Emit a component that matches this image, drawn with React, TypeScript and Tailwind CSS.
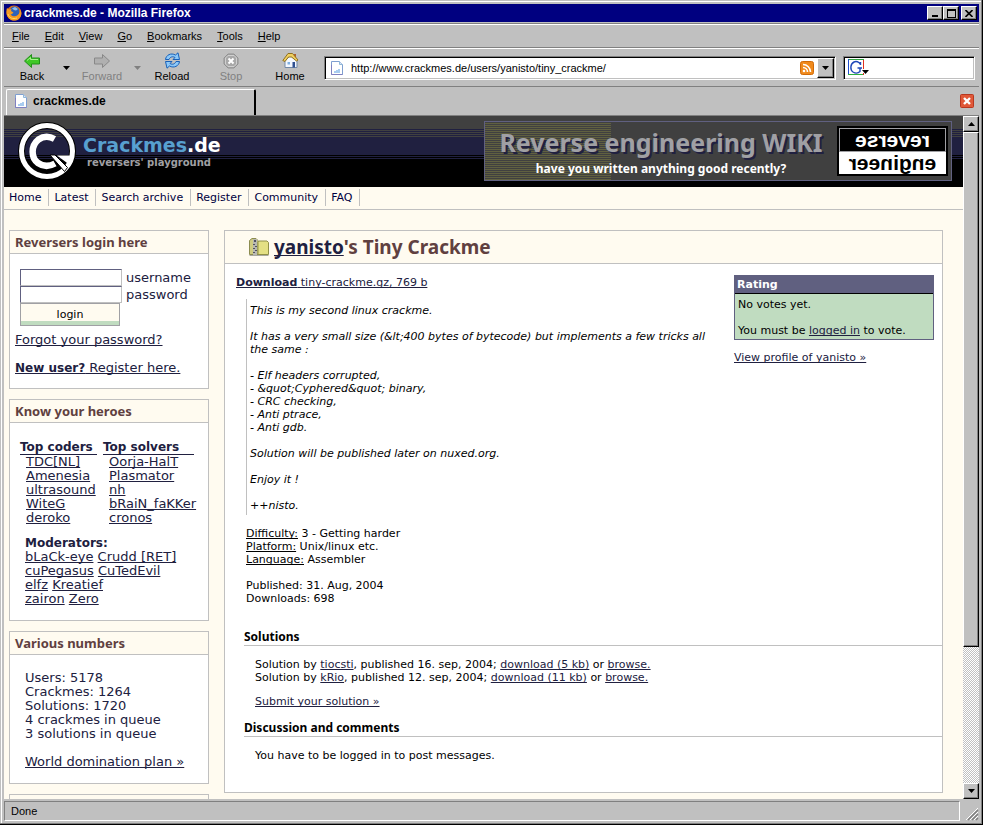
import type { ReactNode } from "react";

const ui = "font-['Liberation_Sans',Arial,sans-serif]";
const raised =
  "border border-t-white border-l-white border-r-black border-b-black bg-[#c0c0c0] shadow-[inset_-1px_-1px_0_#808080]";

function A({ children, className = "" }: { children: ReactNode; className?: string }) {
  return (
    <a href="#" className={`text-[#202040] underline ${className}`}>
      {children}
    </a>
  );
}

function FirefoxIcon() {
  return (
    <svg width="16" height="16" viewBox="0 0 16 16" aria-hidden="true">
      <circle cx="8" cy="8" r="7.5" fill="#e07010" />
      <circle cx="8.5" cy="6.5" r="5" fill="#2f62b8" />
      <path d="M6 3.5 9 2l3 2-2 1.5-2-.5z" fill="#8fc0f0" />
      <path d="M1 3l2 1.5L5.500 4 5 6l2.500 1.500L6 9l-1.500.5C6 12 9.500 12 12 10c2-2 2-4 1.500-6C16 7 16 11 13 14c-3 2.500-8 2-10.500-1C0 10 0 6 1 3z" fill="#f59a23" />
      <path d="M2 9c1 4 5 5.500 9 4" stroke="#ffd860" fill="none" />
    </svg>
  );
}

function PageIcon() {
  return (
    <svg width="12" height="14" viewBox="0 0 12 14" aria-hidden="true">
      <path d="M.5.5h8l3 3v10H.5z" fill="#fff" stroke="#7f9fd0" />
      <path d="M8.500.5v3h3" fill="#d8e6f8" stroke="#90b8d8" />
      <path d="M3 12v-2h2V9h2V8h2v4z" fill="#a8ccf0" />
      <path d="M.5 4v9.500h11" fill="none" stroke="#8080c0" />
    </svg>
  );
}

function ArrowIcon({ flip = false, fill, stroke }: { flip?: boolean; fill: string; stroke: string }) {
  return (
    <svg width="16" height="16" viewBox="0 0 16 16" aria-hidden="true">
      <path
        d={flip ? "M15.500 8 8.500 1.500V5H.500v6H8.500v3.500z" : "M.500 8l7-6.500V5h8v6h-8v3.500z"}
        fill={fill}
        stroke={stroke}
        strokeLinejoin="round"
      />
      {!flip && <path d="M3 7.500 6.500 4.500v2h7.500" stroke="#a8f090" fill="none" />}
    </svg>
  );
}

function ReloadIcon() {
  return (
    <svg width="17" height="17" viewBox="0 0 17 17" aria-hidden="true">
      <path d="M1.500 7.500C2 3 7 .500 11.500 3L14 .800l1.500 6.700H9l2-2C8.500 4 6 5 5 7.500z" fill="#8cc8f8" stroke="#1860b8" />
      <path d="M15.500 9.500c-.500 4.500-5.500 7-10 4.500L3 16.200 1.500 9.500H8l-2 2c2.500 1.500 5 .500 6-2z" fill="#8cc8f8" stroke="#1860b8" />
    </svg>
  );
}

function StopIcon() {
  return (
    <svg width="16" height="16" viewBox="0 0 16 16" aria-hidden="true">
      <path d="M5 1h6l4 4v6l-4 4H5l-4-4V5z" fill="#a8a8a8" stroke="#909090" />
      <path d="M5 2.500h6L13.500 5v6L11 13.500H5L2.500 11V5z" fill="none" stroke="#d0d0d0" />
      <path d="M5.500 5.500l5 5m0-5-5 5" stroke="#fff" strokeWidth="2" />
    </svg>
  );
}

function HomeIcon() {
  return (
    <svg width="17" height="17" viewBox="0 0 17 17" aria-hidden="true">
      <path d="M12 2h2v4h-2z" fill="#b06030" />
      <path d="M3 8.500 8 4l7 4v7.500H3z" fill="#f4f8ff" stroke="#7088a8" />
      <path d="M.8 8.500 6 1.500h4.500l5.500 6.500-1.500 1L9.500 5 6.500 5 3 9.500z" fill="#f0d060" stroke="#907020" />
      <path d="M10.500 10H13v5.500h-2.500z" fill="#305090" />
      <path d="M5.500 10H8v2.500H5.500z" fill="#80b0e0" />
    </svg>
  );
}

function RssIcon() {
  return (
    <svg width="14" height="14" viewBox="0 0 14 14" aria-hidden="true">
      <rect x=".5" y=".5" width="13" height="13" rx="2" fill="#f08a1c" stroke="#d06a08" />
      <circle cx="4" cy="10" r="1.300" fill="#fff" />
      <path d="M3 6.500A4.500 4.500 0 0 1 7.500 11M3 3.500A7.500 7.500 0 0 1 10.500 11" fill="none" stroke="#fff" strokeWidth="1.600" />
    </svg>
  );
}

function GoogleIcon() {
  return (
    <svg width="22" height="17" viewBox="0 0 22 17" aria-hidden="true">
      <path d="M16 .5H.5" stroke="#30a040" />
      <path d="M.5 0v16" stroke="#2050d0" />
      <path d="M0 15.500h16" stroke="#30b040" />
      <path d="M15.500 1v15" stroke="#e03020" />
      <path d="M12.500 6V3M12.500 5.500C11 2.500 8 2 6 3 2 5 2 11 5 13c2.500 1.500 5.500 1 7-.500V9M9.500 9H14" fill="none" stroke="#2048b8" strokeWidth="1.400" />
      <path d="M14 10h8v4h-8z" fill="#fff" />
      <path d="M14 11h7l-3.500 4z" fill="#000" />
    </svg>
  );
}

function Triangle({ up = false, fill = "#000" }: { up?: boolean; fill?: string }) {
  return (
    <svg width="7" height="4" viewBox="0 0 7 4" aria-hidden="true" className="shrink-0">
      <path d={up ? "M0 4h7L3.500 0z" : "M0 0h7L3.500 4z"} fill={fill} />
    </svg>
  );
}

function ZipIcon() {
  return (
    <svg width="20" height="18" viewBox="0 0 20 18" aria-hidden="true">
      <path d="M.5 2.500 3 .5h4l2 2v14H.5z" fill="#d0cc80" stroke="#8c8c50" />
      <path d="M9 4.500l1-1.500h8l1.500 1.500v12H9z" fill="#e4e084" stroke="#909048" />
      <path d="M4 1h4v16H4z" fill="#b8b8b0" />
      <path d="M5 2h2v2H5zM4 6h2v1H4zM6 8h2v1H6zM4 10h2v1H4zM6 12h2v1H6zM4 14h2v1H4z" fill="#505060" />
      <path d="M.5 17.500h19" stroke="#a8a8a0" />
    </svg>
  );
}

function LogoMark() {
  return (
    <svg width="58" height="58" viewBox="0 0 58 58" aria-hidden="true">
      <circle cx="29" cy="29" r="25.500" fill="none" stroke="#000" strokeWidth="7" />
      <circle cx="29" cy="29" r="25.500" fill="none" stroke="#fff" strokeWidth="5" />
      <path d="M36.500 17C31 14 25 14.500 20.500 17.500 12.500 24 13 36 20 41c5 3.500 11.500 3.500 17 .500" fill="none" stroke="#fff" strokeWidth="6.500" />
      <path d="M32 33l5 0 12.500 12.500-3 4z" fill="#fff" stroke="#000" />
      <path d="M39 33.500h14L50.500 42z" fill="#fff" />
    </svg>
  );
}

const menus = ["File", "Edit", "View", "Go", "Bookmarks", "Tools", "Help"];

function ToolButton({ label, icon, className, disabled = false }: { label: string; icon: ReactNode; className: string; disabled?: boolean }) {
  return (
    <button
      type="button"
      disabled={disabled}
      className={`flex shrink-0 flex-col items-center text-[11px] leading-[14px] disabled:text-[#808080] ${className}`}
    >
      <span className="flex h-[17px] items-center">{icon}</span>
      {label}
    </button>
  );
}

function Chrome() {
  return (
    <div className={`${ui} shrink-0 text-[11px] text-black`}>
      <div className="flex h-[18px] items-center bg-[#000080] pr-0.5 pl-0.5">
        <FirefoxIcon />
        <h1 className="flex-1 pl-0.5 text-[12px] leading-[18px] font-bold text-white">crackmes.de - Mozilla Firefox</h1>
        <button type="button" aria-label="Minimize" className={`${raised} flex h-[14px] w-4 items-end justify-center pb-0.5`}>
          <span className="h-0.5 w-1.5 bg-black" />
        </button>
        <button type="button" aria-label="Maximize" className={`${raised} flex h-[14px] w-4 items-center justify-center`}>
          <span className="h-[9px] w-[9px] border border-t-2 border-black" />
        </button>
        <button type="button" aria-label="Close" className={`${raised} ml-0.5 flex h-[14px] w-4 items-center justify-center`}>
          <svg width="8" height="7" viewBox="0 0 8 7" aria-hidden="true">
            <path d="M.5 0 7.500 7M7.500 0 .5 7" stroke="#000" strokeWidth="1.600" />
          </svg>
        </button>
      </div>
      <div className="mt-px flex h-[25px] items-center gap-px border-y border-t-[#808080] border-b-[#808080] pl-px shadow-[inset_0_1px_0_#fff]">
        {menus.map((m) => (
          <button key={m} type="button" className="px-[7px] leading-[14px]">
            <span className="underline">{m[0]}</span>
            {m.slice(1)}
          </button>
        ))}
      </div>
      <div className="flex h-[39px] items-center border-t border-b border-t-white border-b-[#808080]">
        <ToolButton label="Back" className="w-14" icon={<ArrowIcon fill="#40c828" stroke="#209018" />} />
        <button type="button" aria-label="Back history" className="flex w-3 justify-center">
          <Triangle />
        </button>
        <ToolButton label="Forward" disabled className="w-[60px]" icon={<ArrowIcon flip fill="#b0b0b0" stroke="#888888" />} />
        <button type="button" disabled aria-label="Forward history" className="flex w-2.5 justify-center">
          <Triangle fill="#808080" />
        </button>
        <ToolButton label="Reload" className="w-[60px]" icon={<ReloadIcon />} />
        <ToolButton label="Stop" disabled className="w-[58px]" icon={<StopIcon />} />
        <ToolButton label="Home" className="w-[60px]" icon={<HomeIcon />} />
        <div className="ml-1 flex h-6 flex-1 items-center border border-t-[#808080] border-r-white border-b-white border-l-[#808080] bg-white pl-1.5 shadow-[inset_1px_1px_0_#000,inset_-1px_-1px_0_#c0c0c0]">
          <PageIcon />
          <input
            aria-label="Address"
            defaultValue="http://www.crackmes.de/users/yanisto/tiny_crackme/"
            className="ml-2 h-5 min-w-0 flex-1 bg-transparent outline-none"
          />
          <RssIcon />
          <button type="button" aria-label="Address history" className={`${raised} mr-px ml-[3px] flex h-5 w-[17px] items-center justify-center`}>
            <Triangle />
          </button>
        </div>
        <div className="mr-1 ml-[7px] flex h-6 w-[132px] items-center border border-t-[#808080] border-r-white border-b-white border-l-[#808080] bg-white pl-1 shadow-[inset_1px_1px_0_#000,inset_-1px_-1px_0_#c0c0c0]">
          <GoogleIcon />
          <input aria-label="Search the web" className="h-5 min-w-0 flex-1 bg-transparent outline-none" />
        </div>
      </div>
      <div className="flex h-[29px] items-end border-b border-[#808080] pr-[5px]">
        <button
          type="button"
          className="ml-0.5 flex h-[26px] w-[250px] items-center gap-1.5 rounded-t-[2px] border-t border-r-2 border-l border-t-white border-r-black border-l-white pb-1 pl-2 text-[12px] leading-[14px] font-bold"
        >
          <PageIcon />
          crackmes.de
        </button>
        <span className="flex-1" />
        <button type="button" aria-label="Close tab" className="mb-[7px]">
          <svg width="14" height="14" viewBox="0 0 14 14" aria-hidden="true">
            <rect x=".5" y=".5" width="13" height="13" rx="1" fill="#e05838" stroke="#b83820" />
            <path d="M4 4l6 6m0-6-6 6" stroke="#fff" strokeWidth="2.400" />
          </svg>
        </button>
      </div>
    </div>
  );
}

function SiteHeader() {
  return (
    <header className="flex h-[71px] items-start justify-between bg-[linear-gradient(#404040_13px,#202040_13px,#202040_14px,#404040_14px,#404040_15px,#202040_15px,#202040_16px,#404040_16px,#404040_17px,#202040_17px,#202040_18px,#404040_18px,#404040_19px,#202040_19px,#202040_20px,#404040_20px,#404040_21px,#202040_21px,#202040_39px,#000_39px,#000_40px,#202040_40px,#202040_41px,#000_41px,#000_42px,#202040_42px,#202040_43px,#000_43px)] pr-[11px] pl-3.5">
      <a href="#" className="mt-1.5 flex">
        <LogoMark />
        <span className="mt-3 ml-[7px] flex flex-col font-['DejaVu_Sans',Verdana,sans-serif] font-bold">
          <span className="text-[19px] leading-[22px] text-[#58a0d0]">
            Crackmes<span className="text-white">.de</span>
          </span>
          <span className="pl-1 text-[10px] leading-[14px] text-[#a0a0a4]">reversers' playground</span>
        </span>
      </a>
      <a
        href="#"
        className="mt-[5px] flex h-[60px] w-[468px] items-center border border-[#606080] bg-[#404040] bg-[repeating-linear-gradient(#404040_0px,#404040_1px,#606040_1px,#606040_2px)] bg-size-[126px_100%] bg-no-repeat pr-[3px] font-bold"
      >
        <span className="flex flex-1 flex-col items-center font-['Noto_Sans',Tahoma,sans-serif]">
          <span className="text-[25px] leading-[35px] text-[#a0a0a4] [text-shadow:2px_2px_0_#202040]">Reverse engineering WIKI</span>
          <span className="text-[12px] leading-[17px] text-white">have you written anything good recently?</span>
        </span>
        <span className="flex h-[50px] w-[111px] flex-col border border-black bg-black p-px font-['Liberation_Sans',Arial,sans-serif] text-[21px]">
          <span className="flex flex-1 scale-x-[-1] items-center justify-center border border-[#a0a0a4] leading-[18px] text-white">reverse</span>
          <span className="flex flex-1 scale-x-[-1] items-center justify-center bg-white leading-[18px] text-black">engineer</span>
        </span>
      </a>
    </header>
  );
}

function Box({ title, children }: { title: string; children: ReactNode }) {
  return (
    <section className="border border-[#c0c0c0] bg-white">
      <h2 className="h-[23px] border-b border-[#c0c0c0] bg-[#fffbf0] pl-[5px] font-['Noto_Sans','Trebuchet_MS',sans-serif] text-[13px] leading-[22px] font-bold text-[#604040]">
        {title}
      </h2>
      {children}
    </section>
  );
}

function Heroes({ title, names, className }: { title: string; names: string[]; className: string }) {
  return (
    <div className={className}>
      <h3 className="h-3.5 border-b border-[#202040] text-[12px] leading-[13px] font-bold">{title}</h3>
      <ul className="pl-1.5">
        {names.map((n) => (
          <li key={n}>
            <A>{n}</A>
          </li>
        ))}
      </ul>
    </div>
  );
}

function Sidebar() {
  return (
    <aside className="flex w-[200px] shrink-0 flex-col gap-2.5 text-[13px] leading-[14px] whitespace-nowrap text-[#202040]">
      <Box title="Reversers login here">
        <form className="pt-[15px] pb-[13px] pl-[5px]" onSubmit={(e) => e.preventDefault()}>
          <div className="flex flex-col items-start pl-[5px]">
            <div className="flex h-[17px] items-center">
              <input id="user" className="mr-1 h-[17px] w-[102px] border border-t-[#606080] border-r-[#c0c0c0] border-b-[#c0c0c0] border-l-[#606080] bg-white" />
              <label htmlFor="user">username</label>
            </div>
            <div className="flex h-[17px] items-center">
              <input id="pass" type="password" className="mr-1 h-[17px] w-[102px] border border-t-[#606080] border-r-[#c0c0c0] border-b-[#c0c0c0] border-l-[#606080] bg-white" />
              <label htmlFor="pass">password</label>
            </div>
            <button type="submit" className="h-[23px] w-[100px] border border-[#a0a0a4] bg-[#fffbf0] text-[11px] leading-[18px] text-black shadow-[inset_0_-4px_0_#c0dcc0]">
              login
            </button>
          </div>
          <p className="mt-[7px]">
            <A>Forgot your password?</A>
          </p>
          <p className="mt-3.5">
            <A>
              <b className="text-[12px]">New user?</b> Register here.
            </A>
          </p>
        </form>
      </Box>
      <Box title="Know your heroes">
        <div className="pt-[18px] pb-3.5 pl-2.5">
          <div className="flex gap-1.5">
            <Heroes title="Top coders" className="w-[77px]" names={["TDC[NL]", "Amenesia", "ultrasound", "WiteG", "deroko"]} />
            <Heroes title="Top solvers" className="w-[91px]" names={["Oorja-HalT", "Plasmator", "nh", "bRaiN_faKKer", "cronos"]} />
          </div>
          <div className="mt-[11px] pl-[5px]">
            <h3 className="text-[12px] font-bold">Moderators:</h3>
            <p><A>bLaCk-eye</A> <A>Crudd [RET]</A></p>
            <p><A>cuPegasus</A> <A>CuTedEvil</A></p>
            <p><A>elfz</A> <A>Kreatief</A></p>
            <p><A>zairon</A> <A>Zero</A></p>
          </div>
        </div>
      </Box>
      <Box title="Various numbers">
        <div className="pt-4 pb-3.5 pl-[15px]">
          <p>Users: 5178</p>
          <p>Crackmes: 1264</p>
          <p>Solutions: 1720</p>
          <p>4 crackmes in queue</p>
          <p>3 solutions in queue</p>
          <p className="mt-3.5"><A>World domination plan »</A></p>
        </div>
      </Box>
      <div className="h-6 shrink-0 border border-[#c0c0c0]" />
    </aside>
  );
}

const description = `This is my second linux crackme.

It has a very small size (&lt;400 bytes of bytecode) but implements a few tricks all
the same :

- Elf headers corrupted,
- &quot;Cyphered&quot; binary,
- CRC checking,
- Anti ptrace,
- Anti gdb.

Solution will be published later on nuxed.org.

Enjoy it !

++nisto.`;

function SectionTitle({ children }: { children: ReactNode }) {
  return (
    <h3 className="ml-[19px] h-[18px] border-b border-[#c0c0c0] font-['Noto_Sans','Trebuchet_MS',sans-serif] text-[12px] leading-[17px] font-bold">
      {children}
    </h3>
  );
}

function Main() {
  return (
    <main className="min-w-0 flex-1 border border-[#c0c0c0] bg-white pb-[30px] text-[11px] leading-[13px] text-black">
      <h2 className="flex h-[33px] items-center gap-[5px] border-b border-[#c0c0c0] bg-[#fffbf0] pl-6 font-['Noto_Sans','Trebuchet_MS',sans-serif] text-[19px] font-bold text-[#604040]">
        <ZipIcon />
        <span>
          <A>yanisto</A>'s Tiny Crackme
        </span>
      </h2>
      <div className="flex items-start justify-between pt-[11px] pr-2 pl-[11px]">
        <div>
          <p className="mt-px"><A><b>Download</b> tiny-crackme.gz, 769 b</A></p>
          <blockquote className="mt-2.5 ml-2.5 border-l border-[#c0c0c0] pt-[5px] pb-[3px] pl-[3px] whitespace-pre italic">{description}</blockquote>
          <div className="mt-3 ml-2.5">
            <p><u>Difficulty:</u> 3 - Getting harder</p>
            <p><u>Platform:</u> Unix/linux etc.</p>
            <p><u>Language:</u> Assembler</p>
            <p className="mt-[13px]">Published: 31. Aug, 2004</p>
            <p>Downloads: 698</p>
          </div>
        </div>
        <div className="w-[200px] shrink-0">
          <section className="border border-[#606080] bg-[#c0dcc0]">
            <h3 className="border-b border-black bg-[#606080] pl-0.5 leading-[17px] font-bold text-white">Rating</h3>
            <div className="px-[3px] pt-1 pb-0.5">
              <p>No votes yet.</p>
              <p className="mt-[13px]">You must be <A>logged in</A> to vote.</p>
            </div>
          </section>
          <p className="mt-[11px]"><A>View profile of yanisto »</A></p>
        </div>
      </div>
      <div className="mt-[23px]">
        <SectionTitle>Solutions</SectionTitle>
        <div className="pt-3 pb-[11px] pl-[30px]">
          <p>Solution by <A>tiocsti</A>, published 16. sep, 2004; <A>download (5 kb)</A> or <A>browse.</A></p>
          <p>Solution by <A>kRio</A>, published 12. sep, 2004; <A>download (11 kb)</A> or <A>browse.</A></p>
          <p className="mt-[11px]"><A>Submit your solution »</A></p>
        </div>
        <SectionTitle>Discussion and comments</SectionTitle>
        <p className="pt-3 pl-[30px]">You have to be logged in to post messages.</p>
      </div>
    </main>
  );
}

function Scrollbar() {
  return (
    <div className="flex w-4 shrink-0 flex-col bg-[#c0c0c0] bg-[repeating-conic-gradient(#fff_0_25%,#c0c0c0_0_50%)] bg-size-[2px_2px]">
      <button type="button" aria-label="Scroll up" className={`${raised} flex h-4 w-4 items-center justify-center`}>
        <Triangle up />
      </button>
      <div className={`${raised} grow-[79] basis-0`} />
      <span className="grow-[21] basis-0" />
      <button type="button" aria-label="Scroll down" className={`${raised} flex h-4 w-4 items-center justify-center`}>
        <Triangle />
      </button>
    </div>
  );
}

export default function App() {
  return (
    <div className="h-screen border-r border-b border-black bg-[#c0c0c0] [text-decoration-skip-ink:none]">
      <div className="flex h-full flex-col border-r border-b border-[#808080] pt-px pl-px">
        <div className="flex min-h-0 flex-1 flex-col border-t border-l border-white pt-0.5 pr-0.5 pl-0.5">
          <Chrome />
          <div className="flex min-h-0 flex-1">
            <div className="min-w-0 flex-1 overflow-hidden bg-[#fffbf0] font-['DejaVu_Sans',Verdana,sans-serif]">
              <SiteHeader />
              <nav className="flex h-[23px] items-start border-b border-[#c0c0c0] pt-0.5 text-[11px]">
                {["Home", "Latest", "Search archive", "Register", "Community", "FAQ"].map((n) => (
                  <a key={n} href="#" className="border-r border-[#c0c0c0] pr-[7px] pl-[5px] leading-[17px] text-[#000040]">
                    {n}
                  </a>
                ))}
              </nav>
              <div className="flex items-start gap-[15px] pt-5 pr-5 pl-[5px]">
                <Sidebar />
                <Main />
              </div>
            </div>
            <Scrollbar />
          </div>
          <footer className={`${ui} mt-0.5 flex h-[22px] shrink-0 items-start text-[11px]`}>
            <p className="h-5 flex-1 border border-t-[#808080] border-r-white border-b-white border-l-[#808080] pl-1.5 leading-[18px]">Done</p>
            <svg width="19" height="20" viewBox="0 0 19 20" aria-hidden="true">
              <path d="M6 19 18 7M10 19l8-8M14 19l4-4" stroke="#fff" />
              <path d="M8 19 18 9M12 19l6-6M16 19l2-2" stroke="#808080" strokeWidth="1.500" />
            </svg>
          </footer>
        </div>
      </div>
    </div>
  );
}
